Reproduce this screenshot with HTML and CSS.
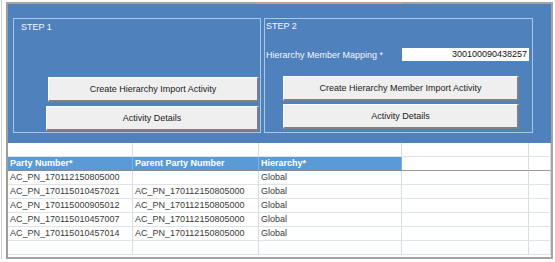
FILE: index.html
```html
<!DOCTYPE html>
<html>
<head>
	<title>Hierarchy Import</title>
<link rel="stylesheet" href="styles.css">
</head>
<body>
<div class="page">
	<div class="frame">
		<!-- 上方操作区 -->
		<div class="band">
			<div class="panel step1">
				<div class="label">STEP 1</div>
				<div class="btns">
					<div class="btn btn-a">Create Hierarchy Import Activity</div>
					<div class="btn btn-b">Activity Details</div>
				</div>
			</div>
			<div class="panel step2">
				<div class="label">STEP 2</div>
				<div class="mapping">
					<span>Hierarchy Member Mapping *</span>
					<div class="input">300100090438257</div>
				</div>
				<div class="btns">
					<div class="btn">Create Hierarchy Member Import Activity</div>
					<div class="btn">Activity Details</div>
				</div>
			</div>
		</div>
		<!-- 数据表 -->
		<div class="grid">
			<div></div><div></div><div></div><div></div><div></div>
			<div class="hd">Party Number*</div><div class="hd">Parent Party Number</div><div class="hd">Hierarchy*</div><div class="hd-end"></div><div class="hd-end"></div>
			<div>AC_PN_170112150805000</div><div></div><div>Global</div><div></div><div></div>
			<div>AC_PN_170115010457021</div><div>AC_PN_170112150805000</div><div>Global</div><div></div><div></div>
			<div>AC_PN_170115000905012</div><div>AC_PN_170112150805000</div><div>Global</div><div></div><div></div>
			<div>AC_PN_170115010457007</div><div>AC_PN_170112150805000</div><div>Global</div><div></div><div></div>
			<div>AC_PN_170115010457014</div><div>AC_PN_170112150805000</div><div>Global</div><div></div><div></div>
			<div></div><div></div><div></div><div></div><div></div>
		</div>
	</div>
</div>
</body>
</html>
```

FILE: styles.css
```css
*{margin: 0;padding: 0;box-sizing: border-box;}
body{background: #fff;font-family: "Liberation Sans", Arial, sans-serif;font-size: 9px;color: #333;}
.page{margin-left: 1px;width: 554px;height: 259px;border-left: 1px solid #cfcfcf;padding: 2px 0 0 4px;}
.frame{position: relative;width: 547px;height: 257px;border: 2px solid #a3a3a3;border-left-color: #9c9c9c;}
.frame::before{content: "";position: absolute;left: 248px;top: -2px;width: 146px;height: 2px;background: #c9a47e;}

.band{display: flex;gap: 3px;height: 139px;background: #4f81bd;padding: 14px 0 0 5px;}
.panel{display: flex;flex-direction: column;height: 115px;border: 1px solid #a9c6ea;color: #f4f7fc;}
.step1{width: 248px;}
.step2{width: 269px;padding-right: 3px;}
.step1 .label{margin: 3px 0 0 7px;line-height: 11px;}
.step2 .label{margin: 2px 0 0 1px;line-height: 11px;}

.btns{display: flex;flex-direction: column;margin-top: auto;}
.btn{height: 25px;line-height: 23px;text-align: center;color: #222;background: #efefef;border-top: 1px solid #fafafa;border-left: 1px solid #fafafa;border-right: 2px solid #7f7f7f;border-bottom: 2px solid #808080;}
.step1 .btns{padding-bottom: 1px;}
.step1 .btn-a{margin-left: 34px;width: 211px;}
.step1 .btn-b{margin: 4px 0 0 32px;width: 213px;}
.step2 .btns{margin: 15px 0 0 18px;width: 236px;gap: 3px;}

.mapping{display: flex;align-items: center;margin: 16px 0 0 1px;height: 13px;}
.mapping .input{margin-left: auto;width: 127px;height: 13px;line-height: 13px;background: #fff;color: #111;text-align: right;padding-right: 2px;}

.grid{display: grid;grid-template-columns: 125px 126px 143px 127px 1fr;grid-auto-rows: 14px;}
.grid div{border-right: 1px solid #d6dde8;border-bottom: 1px solid #dfe3ea;padding-left: 2px;line-height: 13px;white-space: nowrap;overflow: hidden;color: #3a3a3a;}
.grid .hd{background: #5b9bd5;color: #fff;font-weight: bold;border-right-color: #7fb0df;border-bottom-color: #8a8a8a;}
.grid .hd-end{border-bottom-color: #9a9a9a;}
```
